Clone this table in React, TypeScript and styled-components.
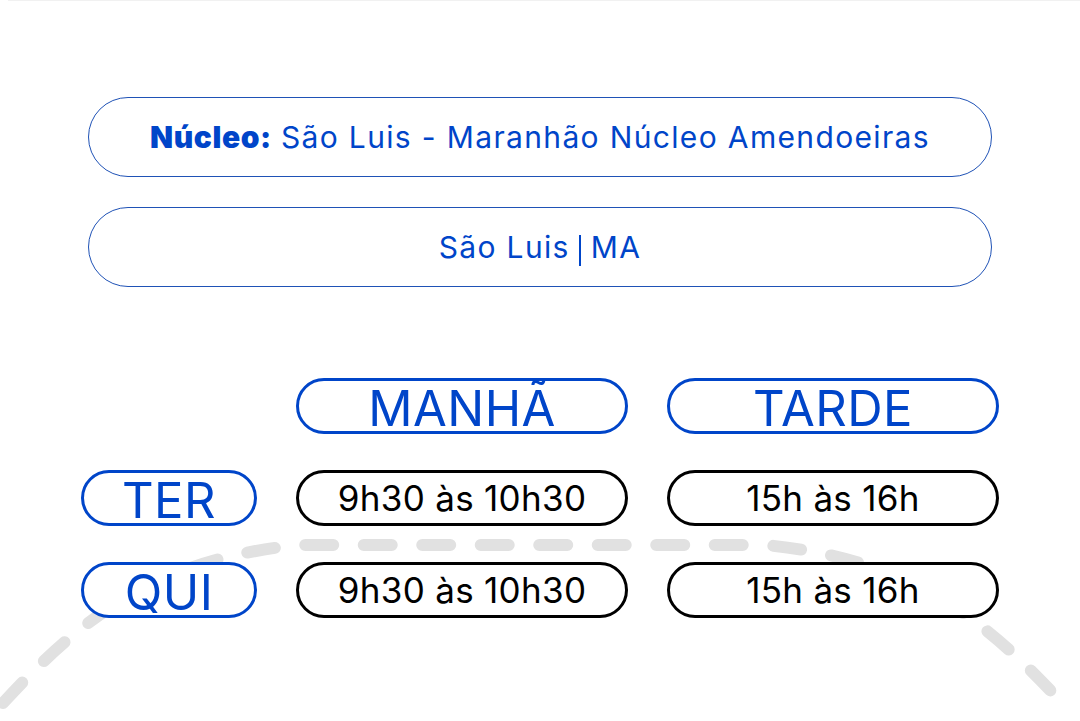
import React from "react";
import styled, { createGlobalStyle } from "styled-components";

const Global = createGlobalStyle`
  html, body { margin: 0; padding: 0; background: #ffffff; }
  body { font-family: Inter, "Noto Sans", sans-serif; }
`;

const BLUE = "#0045c9";

const Page = styled.div`
  position: relative;
  width: 1080px;
  height: 721px;
  overflow: hidden;
  background: #fff;
`;

const TopRule = styled.div`
  margin-left: 8px;
  height: 1px;
  background: #f1f1f1;
`;

const Content = styled.main`
  position: relative;
  z-index: 1;
  display: flex;
  flex-direction: column;
  padding: 96px 0 0 88px;
`;

const InfoList = styled.section`
  display: flex;
  flex-direction: column;
  gap: 30px;
`;

const InfoCard = styled.div`
  box-sizing: border-box;
  width: 904px;
  height: 80px;
  border: 1.5px solid #1f52b6;
  border-radius: 40px;
  display: flex;
  align-items: center;
  justify-content: center;
  font-size: 30px;
  color: ${BLUE};
  letter-spacing: 1.35px;
  background: #fff;
`;

const Strong = styled.strong`
  font-weight: 900;
  letter-spacing: 0.6px;
  margin-right: 9px;
`;

const Bar = styled.span`
  display: inline-block;
  width: 2px;
  height: 31px;
  background: ${BLUE};
  margin: 0 10px 0 9px;
  transform: translateY(3px);
`;

const Schedule = styled.section`
  margin: 91px 0 0 -7px;
  display: grid;
  grid-template-columns: 176px 332px 332px;
  grid-auto-rows: 56px;
  column-gap: 39px;
  row-gap: 36px;
`;

const Pill = styled.div<{ $tone: "blue" | "black"; $size: number }>`
  box-sizing: border-box;
  height: 56px;
  border: 3px solid ${(p) => (p.$tone === "blue" ? BLUE : "#000")};
  border-radius: 28px;
  background: #fff;
  display: flex;
  align-items: center;
  justify-content: center;
  color: ${(p) => (p.$tone === "blue" ? BLUE : "#000")};
  font-size: ${(p) => p.$size}px;
  line-height: 1;
  font-weight: 400;
  padding-top: ${(p) => (p.$tone === "blue" ? 4 : 1)}px;
  letter-spacing: ${(p) => (p.$tone === "blue" ? "0.5px" : "0.3px")};
`;

const Spacer = styled.div``;

const Curve = styled.svg`
  position: absolute;
  left: 0;
  top: 0;
  z-index: 0;
  pointer-events: none;
`;

const rows = [
  { day: "TER", morning: "9h30 às 10h30", afternoon: "15h às 16h" },
  { day: "QUI", morning: "9h30 às 10h30", afternoon: "15h às 16h" },
];

export default function App() {
  return (
    <Page>
      <Global />
      <Curve width="1080" height="721" viewBox="0 0 1080 721">
        <path
          d="M 3 703 C 75 625 150 559 300 545 L 765 545 C 915 559 990 625 1062 703"
          fill="none"
          stroke="#e1e1e1"
          strokeWidth="12"
          strokeLinecap="round"
          strokeDasharray="28 30.5"
        />
      </Curve>
      <TopRule />
      <Content>
        <InfoList>
          <InfoCard>
            <Strong>Núcleo:</Strong>São Luis - Maranhão Núcleo Amendoeiras
          </InfoCard>
          <InfoCard>
            São Luis<Bar />MA
          </InfoCard>
        </InfoList>
        <Schedule>
          <Spacer />
          <Pill $tone="blue" $size={49}>MANHÃ</Pill>
          <Pill $tone="blue" $size={49}>TARDE</Pill>
          {rows.map((r) => (
            <React.Fragment key={r.day}>
              <Pill $tone="blue" $size={49}>{r.day}</Pill>
              <Pill $tone="black" $size={35}>{r.morning}</Pill>
              <Pill $tone="black" $size={35}>{r.afternoon}</Pill>
            </React.Fragment>
          ))}
        </Schedule>
      </Content>
    </Page>
  );
}
